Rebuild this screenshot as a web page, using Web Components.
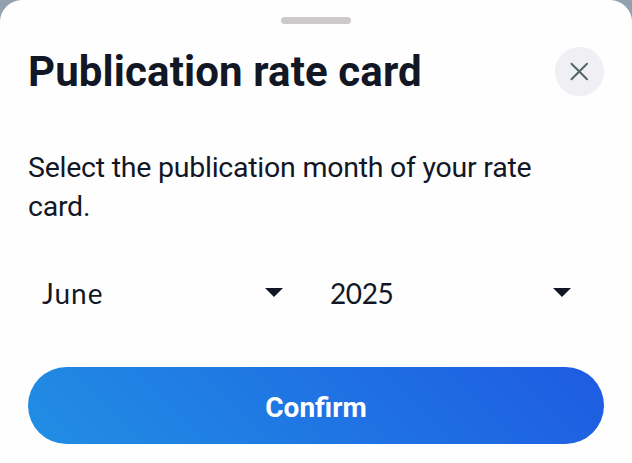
<!DOCTYPE html>
<html lang="en">
<head>
<meta charset="utf-8">
<meta name="viewport" content="width=device-width, initial-scale=1">
<title>Publication rate card</title>
<style>
  body {
    margin: 0;
    background-color: #93a1ae;
    color: #121726;
    font-family: Roboto, "Liberation Sans", sans-serif;
  }
  .month {
    letter-spacing: 1px;
  }
  .year {
    letter-spacing: -0.4px;
  }
</style>
</head>
<body>
<bottom-sheet heading="Publication rate card">
  <span slot="description">Select the publication month of your rate card.</span>
  <select-field class="month" value="June"></select-field>
  <select-field class="year" value="2025"></select-field>
  <primary-button slot="action">Confirm</primary-button>
</bottom-sheet>

<script>
class CloseButton extends HTMLElement {
  constructor() {
    super();
    this.attachShadow({ mode: 'open' });
    this.shadowRoot.innerHTML = `
      <style>
        :host {
          display: block;
          flex: none;
        }
        button {
          display: flex;
          align-items: center;
          justify-content: center;
          width: 49px;
          height: 49px;
          padding: 0;
          border: none;
          border-radius: 50%;
          background-color: #efeff4;
          color: #52646c;
          cursor: pointer;
        }
      </style>
      <button aria-label="Close">
        <svg width="19" height="19" viewBox="0 0 19 19" fill="none" stroke="currentColor" stroke-width="2" stroke-linecap="round">
          <path d="M1.5 1.8L17 17.2M17 1.8L1.5 17.2"/>
        </svg>
      </button>
    `;
  }
}

class SelectField extends HTMLElement {
  constructor() {
    super();
    this.attachShadow({ mode: 'open' });
  }

  static get observedAttributes() {
    return ['value'];
  }

  attributeChangedCallback() {
    this.render();
  }

  render() {
    this.shadowRoot.innerHTML = `
      <style>
        :host {
          display: flex;
          align-items: center;
          justify-content: space-between;
          height: 56px;
          padding: 0 33px 0 14px;
          box-sizing: border-box;
          font-family: Lato, sans-serif;
          font-size: 28px;
          line-height: 34px;
          cursor: pointer;
        }
        span {
          margin-top: -2px;
        }
        svg {
          display: block;
          margin-top: -3px;
        }
      </style>
      <span>${this.getAttribute('value')}</span>
      <svg width="18" height="9" viewBox="0 0 18 9" fill="currentColor"><path d="M0 0H18L9 9Z"/></svg>
    `;
  }
}

class PrimaryButton extends HTMLElement {
  constructor() {
    super();
    this.attachShadow({ mode: 'open' });
    this.shadowRoot.innerHTML = `
      <style>
        :host {
          display: block;
        }
        button {
          display: block;
          width: 100%;
          height: 77px;
          padding: 4px 0 0;
          border: none;
          border-radius: 39px;
          background: linear-gradient(45deg, #218ee4 0%, #1e5be2 100%);
          color: #fff;
          font-family: inherit;
          font-size: 28px;
          font-weight: 700;
          cursor: pointer;
        }
      </style>
      <button><slot></slot></button>
    `;
  }
}

class BottomSheet extends HTMLElement {
  constructor() {
    super();
    this.attachShadow({ mode: 'open' });
    this.render();
  }

  render() {
    this.shadowRoot.innerHTML = `
      <style>
        :host {
          display: flex;
          flex-direction: column;
          height: 463px;
          padding: 17px 28px 0;
          box-sizing: border-box;
          border-radius: 22px 22px 0 0;
          background-color: #fefefe;
        }
        .handle {
          align-self: center;
          width: 70px;
          height: 7px;
          border-radius: 4px;
          background-color: #cbc9ca;
        }
        .header {
          display: flex;
          align-items: center;
          justify-content: space-between;
          margin-top: 23px;
        }
        h1 {
          margin: 0;
          font-size: 42px;
          font-weight: 700;
          line-height: 49px;
          letter-spacing: 0.12px;
        }
        .description {
          max-width: 540px;
          margin: 52px 0 0;
          font-size: 28.5px;
          line-height: 39px;
          letter-spacing: -0.24px;
        }
        .fields {
          display: grid;
          grid-template-columns: 1fr 1fr;
          margin-top: 40px;
        }
        .action {
          margin-top: 45px;
        }
      </style>
      <div class="handle"></div>
      <div class="header">
        <h1>${this.getAttribute('heading')}</h1>
        <close-button></close-button>
      </div>
      <p class="description"><slot name="description"></slot></p>
      <div class="fields"><slot></slot></div>
      <div class="action"><slot name="action"></slot></div>
    `;
  }
}

customElements.define('close-button', CloseButton);
customElements.define('select-field', SelectField);
customElements.define('primary-button', PrimaryButton);
customElements.define('bottom-sheet', BottomSheet);
</script>
</body>
</html>
